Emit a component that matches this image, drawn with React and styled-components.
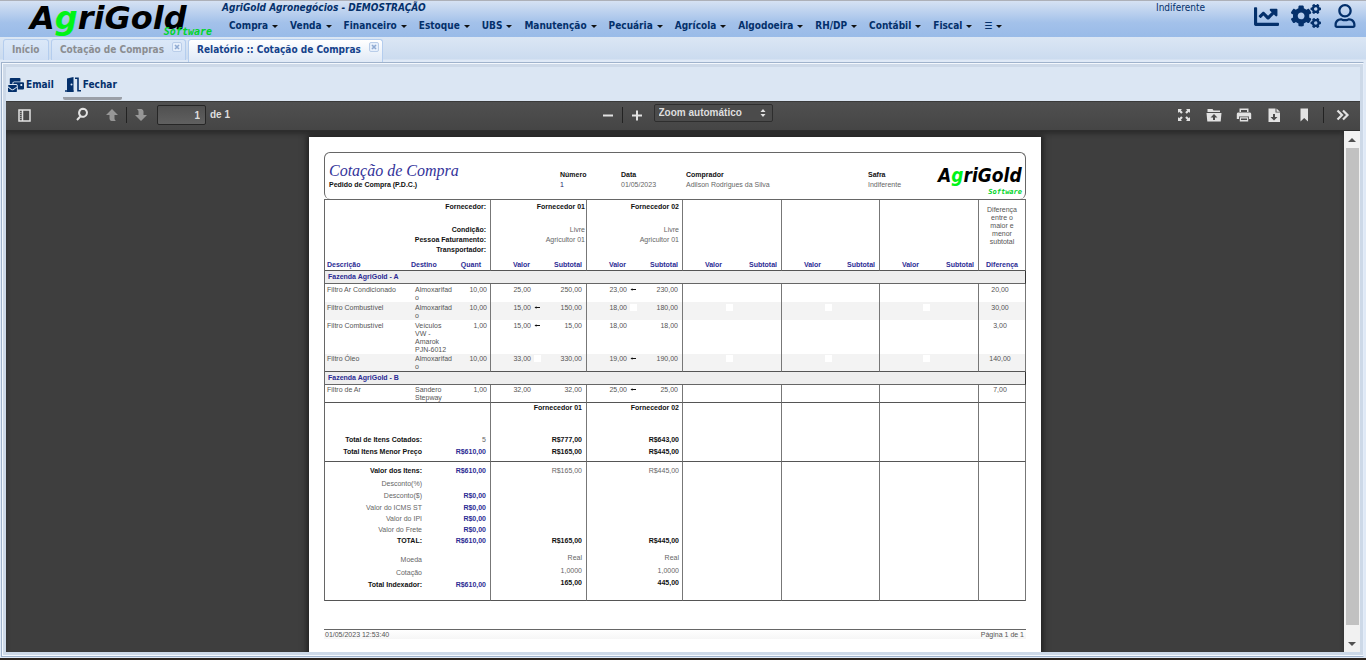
import React from 'react';
import styled, {createGlobalStyle, css} from 'styled-components';
import {FaChartLine, FaCogs, FaRegUser, FaMailBulk} from 'react-icons/fa';

const GlobalStyle = createGlobalStyle`
  * {
    box-sizing: border-box;
  }
  body {
    margin: 0;
    overflow: hidden;
  }
  button, input, select {
    font: inherit;
    color: inherit;
    margin: 0;
    padding: 0;
    border: 0;
    background: none;
  }
`

const uiFont = '"DejaVu Sans Condensed", "DejaVu Sans", sans-serif';
const navy = '#04306b';

const Screen = styled.div`
  height: 100vh;
  display: flex;
  flex-direction: column;
  font-family: ${uiFont};
  font-size: 10px;
  line-height: 14px;
  color: ${navy};
  background: #dfe9f6;
  border-top: 1px solid #adb0b8;
  border-bottom: 2px solid #2c241e;
`
const Header = styled.header`
  flex: none;
  height: 36px;
  display: flex;
  background: linear-gradient(#d6e2f3, #a3c1ea 60%, #99bbe8);
`
const HeaderLogo = styled.svg`
  flex: none;
  width: 222px;
  height: 36px;
  overflow: visible;
`
const HeaderMain = styled.div`
  flex: 1;
`
const Company = styled.div`
  font-weight: bold;
  font-style: italic;
`
const Menu = styled.nav`
  display: flex;
  gap: 12px;
  padding: 4px 0 0 7px;
`
const MenuButton = styled.button`
  display: flex;
  align-items: center;
  gap: 4px;
  font-weight: bold;
  line-height: 14px;
  &::after {
    content: '';
    border: 3px solid transparent;
    border-top-color: #111;
    border-bottom: 0;
  }
`
const Season = styled.div`
  width: 98px;
`
const HeaderIcons = styled.div`
  display: flex;
  align-items: flex-start;
  gap: 12px;
  padding: 2px 9px 0 0;
`
const IconButton = styled.button`
  display: flex;
  align-items: center;
  height: 26px;
  svg {
    display: block;
  }
`

const Tabs = styled.div`
  flex: none;
  height: 25px;
  display: flex;
  gap: 2px;
  padding: 2px 3px 0;
  background: linear-gradient(#dbe6f4, #cbdbef 22px, #dfe9f6 23px);
`
const Tab = styled.div`
  min-width: 46px;
  height: 21px;
  display: flex;
  align-items: flex-start;
  gap: 8px;
  padding: 0 2px 0 8px;
  border: 1px solid #b4cdee;
  border-bottom: 0;
  border-radius: 3px 3px 0 0;
  background: linear-gradient(#dbe8f8, #cfdff5);
  ${({active}) => active && css`
    height: 23px;
    background: linear-gradient(#fff, #dfe9f6);
  `};
`
const TabButton = styled.button`
  height: 19px;
  font-weight: bold;
  color: ${({active}) => active ? '#15428b' : '#8b8d91'};
`
const CloseButton = styled.button`
  width: 11px;
  height: 11px;
  margin-top: 2px;
  svg {
    display: block;
  }
`

const Frame = styled.main`
  flex: 1;
  min-height: 0;
  display: flex;
  margin: 0 2px 1px 1px;
  border: 1px solid #9fb2cb;
  border-right-color: #e4edf9;
  background: #f4f8fd;
  padding: 1px 0 1px 1px;
`
const FrameInner = styled.div`
  flex: 1;
  min-width: 0;
  display: flex;
  flex-direction: column;
  border: 3px solid #cdd9e8;
`
const Actions = styled.div`
  flex: none;
  height: 34px;
  display: flex;
  gap: 8px;
  padding: 5px 0 0 2px;
  background: #dbe6f3;
`
const Action = styled.button`
  display: flex;
  align-items: center;
  gap: 2px;
  height: 28px;
  font-weight: bold;
  border-bottom: 3px solid ${({current}) => current ? '#9a9fa7' : 'transparent'};
  border-radius: 0 0 2px 2px;
  padding: ${({current}) => current ? '0 5px 0 2px' : '0 1px 0 0'};
`

const Viewer = styled.div`
  flex: 1;
  min-height: 0;
  display: flex;
  flex-direction: column;
  background: #3e3e3e;
`
const ViewerBar = styled.div`
  flex: none;
  height: 30px;
  display: grid;
  grid-template-columns: 1fr auto 1fr;
  padding-bottom: 2px;
  background: linear-gradient(#505050, #454545);
  border-top: 1px solid #3a3a3a;
  border-bottom: 1px solid #2d2d2d;
  font: bold 10px/14px "Liberation Sans", Arial, sans-serif;
  color: #dedede;
`
const BarGroup = styled.div`
  display: flex;
  align-items: center;
  justify-content: ${({end}) => end ? 'flex-end' : 'flex-start'};
  padding: ${({end}) => end ? '0 2px 0 0' : '0 0 0 10px'};
`
const ZoomGroup = styled(BarGroup)`
  padding: 0 0 0 6px;
`
const ToolButton = styled.button`
  width: ${({wide}) => wide ? 30 : 16}px;
  height: 24px;
  display: flex;
  align-items: center;
  justify-content: center;
  opacity: ${({disabled}) => disabled ? 0.5 : 1};
`
const Gap = styled.span`
  width: ${({size}) => size}px;
`
const Separator = styled.span`
  width: 1px;
  height: 16px;
  margin: 0 ${({space}) => space}px;
  background: #222;
`
const PageInput = styled.input`
  width: 49px;
  height: 20px;
  margin: 0 4px 0 8px;
  padding-right: 5px;
  text-align: right;
  border: 1px solid #262626;
  border-radius: 2px;
  background: linear-gradient(#505050, #606060);
`
const ZoomBox = styled.div`
  display: grid;
  align-self: flex-start;
  width: 119px;
  height: 18px;
  margin: 2px 0 0 9px;
  border: 1px solid #2e2e2e;
  border-radius: 2px;
  background: #4b4b4b;
  > * {
    grid-area: 1 / 1;
  }
  svg {
    justify-self: end;
    align-self: center;
    margin-right: 6px;
    pointer-events: none;
  }
`
const ZoomSelect = styled.select`
  appearance: none;
  padding-left: 4px;
`

const ViewerBody = styled.div`
  flex: 1;
  min-height: 0;
  display: flex;
`
const Canvas = styled.div`
  flex: 1;
  overflow: hidden;
  display: flex;
  justify-content: center;
  padding: 6px 0 0;
  box-shadow: inset 0 3px 4px #2c2c2c;
`
const Scrollbar = styled.div`
  width: 16px;
  display: flex;
  flex-direction: column;
  background: #f1f1f1;
`
const ScrollArrow = styled.button`
  height: 17px;
  display: flex;
  align-items: center;
  justify-content: center;
`
const ScrollTrack = styled.div`
  flex: 1;
  padding: 0 1px 10px 2px;
`
const ScrollThumb = styled.div`
  height: 100%;
  background: #c1c1c1;
`

const Sheet = styled.article`
  flex: none;
  width: 732px;
  height: 1035px;
  padding: 15px 15px 0;
  background: #fff;
  box-shadow: 0 0 6px 2px #1f1f1f;
  font: 7px/8px "Liberation Sans", Arial, sans-serif;
  color: #555;
`
const SheetHead = styled.div`
  display: grid;
  grid-template-columns: 235px 61px 65px 182px 66px 1fr;
  height: 47px;
  border: 1px solid #666;
  border-bottom: 0;
  border-radius: 6px;
`
const SheetTitle = styled.h1`
  margin: 7px 0 0 4px;
  font: italic 16px/21px "Liberation Serif", "Times New Roman", serif;
  color: #33339a;
`
const SheetSub = styled.div`
  margin-left: 4px;
  font-weight: bold;
  color: #111;
`
const Field = styled.div`
  padding-top: 17px;
  line-height: 10px;
  color: ${({strong}) => strong ? '#22226a' : '#666'};
  b {
    display: block;
    color: #111;
  }
`
const Report = styled.table`
  width: 702px;
  table-layout: fixed;
  border-collapse: separate;
  border-spacing: 0;
  border: solid #666;
  border-width: 1px 0 0 1px;
`
const Row = styled.tr`
  height: ${({h}) => h}px;
  background: ${({shaded}) => shaded ? '#f3f3f3' : '#fff'};
`
const Cell = styled.td`
  padding: ${({end}) => end ? 1 : 2}px ${({right = 4}) => right}px 0 ${({left = 0}) => left}px;
  text-align: ${({align = 'left'}) => align};
  vertical-align: top;
  overflow-wrap: break-word;
  ${({line}) => line && css`border-right: 1px solid #777;`};
  ${({end}) => end && css`border-bottom: 1px solid #555;`};
`
const HeadCell = styled(Cell).attrs({as: 'th'})`
  font-weight: bold;
  color: ${({dark}) => dark ? '#111' : '#2b2b94'};
`
const SupplierLines = styled.div`
  display: grid;
  grid-template-rows: 23px 10px 10px 10px;
  line-height: 10px;
  span {
    font-weight: normal;
    color: #666;
  }
`
const DiffNote = styled.div`
  padding-top: 4px;
  font-weight: normal;
  color: #555;
`
const GroupCell = styled.th`
  height: 13px;
  padding: 0 3px;
  text-align: left;
  line-height: 12px;
  font-weight: bold;
  color: #2b2b94;
  background: #eee;
  border-right: 1px solid #333;
  border-bottom: 1px solid #666;
`
const PriceFlag = styled.span`
  display: inline-block;
  width: 7px;
  height: 7px;
  margin-left: 3px;
  vertical-align: top;
  background: ${({blank}) => blank ? '#fff' : 'none'};
  svg {
    display: block;
  }
`
const TotalCell = styled.td`
  padding: 0 ${({right = 4}) => right}px ${({lift = 0}) => lift}px 0;
  text-align: right;
  vertical-align: bottom;
  line-height: 10px;
  font-weight: ${({bold}) => bold ? 'bold' : 'normal'};
  color: ${({tone = '#666'}) => tone};
  ${({line}) => line && css`border-right: 1px solid #777;`};
  ${({end}) => end && css`border-bottom: 1px solid #555;`};
`
const SheetFoot = styled.footer`
  display: flex;
  justify-content: space-between;
  margin-top: 28px;
  padding: 1px 2px 0 1px;
  border-top: 1px solid #666;
  background: linear-gradient(#fff, #f6f6f6);
`

const menuItems = ['Compra', 'Venda', 'Financeiro', 'Estoque', 'UBS', 'Manutenção', 'Pecuária',
  'Agrícola', 'Algodoeira', 'RH/DP', 'Contábil', 'Fiscal', '☰'];

const suppliers = [
  {name: 'Fornecedor 01', terms: 'Livre', billing: 'Agricultor 01', inset: 1},
  {name: 'Fornecedor 02', terms: 'Livre', billing: 'Agricultor 01', inset: 3},
  {}, {}, {},
];

const colWidths = [86, 12, 31, 37, 51, 45, 51, 45, 51, 48, 51, 47, 51, 48, 47];

const groups = [
  {
    title: 'Fazenda AgriGold - A',
    items: [
      {name: 'Filtro Ar Condicionado', dest: 'Almoxarifado', qty: '10,00', prices: [['25,00', '250,00'], ['23,00', '230,00']], best: 1, diff: '20,00', h: 18},
      {name: 'Filtro Combustível', dest: 'Almoxarifado', qty: '10,00', prices: [['15,00', '150,00'], ['18,00', '180,00']], best: 0, diff: '30,00', h: 18},
      {name: 'Filtro Combustível', dest: 'Veículos VW - Amarok PJN-6012', qty: '1,00', prices: [['15,00', '15,00'], ['18,00', '18,00']], best: 0, diff: '3,00', h: 34},
      {name: 'Filtro Óleo', dest: 'Almoxarifado', qty: '10,00', prices: [['33,00', '330,00'], ['19,00', '190,00']], best: 1, diff: '140,00', h: 18},
    ],
  },
  {
    title: 'Fazenda AgriGold - B',
    items: [
      {name: 'Filtro de Ar', dest: 'Sandero Stepway', qty: '1,00', prices: [['32,00', '32,00'], ['25,00', '25,00']], best: 1, diff: '7,00', h: 18},
    ],
  },
];

const totals = [
  {values: ['Fornecedor 01', 'Fornecedor 02'], bold: true, h: 10},
  {label: 'Total de Itens Cotados:', sum: '5', plainSum: true, values: ['R$777,00', 'R$643,00'], bold: true, h: 32},
  {label: 'Total Itens Menor Preço', sum: 'R$610,00', values: ['R$165,00', 'R$445,00'], bold: true, h: 17, lift: 4, end: true},
  {label: 'Valor dos Itens:', sum: 'R$610,00', values: ['R$165,00', 'R$445,00'], boldLabel: true, h: 14},
  {label: 'Desconto(%)', h: 13},
  {label: 'Desconto($)', sum: 'R$0,00', h: 12},
  {label: 'Valor do ICMS ST', sum: 'R$0,00', h: 12},
  {label: 'Valor do IPI', sum: 'R$0,00', h: 11},
  {label: 'Valor do Frete', sum: 'R$0,00', h: 11},
  {label: 'TOTAL:', sum: 'R$610,00', values: ['R$165,00', 'R$445,00'], bold: true, h: 11},
  {label: 'Moeda', values: ['Real', 'Real'], h: 19, raise: 2},
  {label: 'Cotação', values: ['1,0000', '1,0000'], h: 13, raise: 2},
  {label: 'Total Indexador:', sum: 'R$610,00', values: ['165,00', '445,00'], bold: true, h: 21, lift: 10, raise: 2, end: true},
];

const CloseIcon = () => (
  <svg width="11" height="11" viewBox="0 0 11 11">
    <rect x="0.5" y="0.5" width="9" height="9" rx="1.5" fill="#e6effb" stroke="#b9cde9"/>
    <path d="M3 3l4 4M7 3l-4 4" stroke="#8faad2" strokeWidth="1.6"/>
  </svg>
)

const DoorIcon = () => (
  <svg width="16" height="15" viewBox="0 0 16 15">
    <path d="M2 1.500L8.500 0v15H2z" fill={navy}/>
    <path d="M0 14h8.500M10 1.200h3v12.600h3" fill="none" stroke={navy} strokeWidth="1.600"/>
    <circle cx="6.500" cy="7.500" r="1" fill="#dbe6f3"/>
  </svg>
)

const toolPaths = {
  sidebar: <><rect x="3" y="3" width="11" height="11" fill="none" stroke="#e2e2e2" strokeWidth="1.500"/><path d="M6.500 3v11" stroke="#e2e2e2" strokeWidth="1.500"/><path d="M4 5.500h2M4 7.500h2M4 9.500h2M4 11.500h2" stroke="#999"/></>,
  search: <path d="M9 1.800a4 4 0 1 1-2.300 7.300L3 13M6.700 9A4 4 0 0 1 9 1.800" fill="none" stroke="#e2e2e2" strokeWidth="2"/>,
  up: <path d="M8 2l6 6h-3.500v3.500q0 1.500 1.500 2.500H7.500q-2-.5-2-2.500V8H2z"/>,
  down: <path d="M8 14l6-6h-3.500V4.500q0-2-2-2.500H4q1.500 1 1.500 2.500V8H2z"/>,
  minus: <path d="M3 7.500h10v2H3z"/>,
  plus: <path d="M3 7.500h4v-4h2v4h4v2H9v4H7v-4H3z"/>,
  full: <path d="M2 2h4L4.800 3.200l2 2-1.600 1.600-2-2L2 6zM14 2v4l-1.200-1.200-2 2-1.600-1.600 2-2L10 2zM2 14v-4l1.200 1.200 2-2 1.600 1.600-2 2L6 14zM14 14h-4l1.200-1.200-2-2 1.600-1.600 2 2L14 10z"/>,
  open: <path fillRule="evenodd" d="M1.500 2h5l1 1.500H14V5H1.500zM.5 6h15l-.8 8.500H1.300zM8 7L4.500 10.500H7V13h2v-2.500h2.500z"/>,
  print: <path fillRule="evenodd" d="M3.500 1.500h9V5h-9zM5 3v2h6V3zM2 5.500h12q1.200 0 1.200 1.500v5H13V9.500H3V12H.8V7Q.8 5.500 2 5.500zM3.800 10.300h8.400v4.200H3.800zM5 11.500v1.500h6v-1.500z"/>,
  save: <path fillRule="evenodd" d="M2.500 1.500h7v4h4.500V15H2.500zM10.500 1.500L14 4.800h-3.500zM7 7v3H4.500L8 13.500l3.500-3.500H9V7z"/>,
  mark: <path d="M4.500 1.500h7.500v13L8.200 11l-3.700 3.500z"/>,
  more: <path d="M2.500 3.500L7 8l-4.500 4.500M8 3.500L12.500 8 8 12.500" fill="none" stroke="#e2e2e2" strokeWidth="2.200"/>,
};

const Tool = ({icon, label, wide, disabled}) => (
  <ToolButton aria-label={label} wide={wide} disabled={disabled}>
    <svg width="16" height="16" viewBox="0 0 16 16" fill="#e2e2e2">{toolPaths[icon]}</svg>
  </ToolButton>
)

const Flag = ({best, shaded}) => (
  <PriceFlag blank={shaded && !best}>
    {best && (
      <svg width="7" height="7" viewBox="0 0 7 7">
        <path d="M0.500 3.500l2-1.300v.8h3.500v1H2.500v.8z" fill="#111"/>
      </svg>
    )}
  </PriceFlag>
)

const ItemRow = ({item, shaded, end}) => (
  <Row h={item.h} shaded={shaded}>
    <Cell left={2} end={end}>{item.name}</Cell>
    <Cell colSpan={2} left={4} right={0} end={end}>{item.dest}</Cell>
    <Cell align="right" right={3} line end={end}>{item.qty}</Cell>
    {suppliers.map((supplier, i) => {
      const price = item.prices[i] || [];
      return (
        <React.Fragment key={i}>
          <Cell align="right" right={1} end={end}>
            {price[0]}<Flag best={item.best === i} shaded={shaded}/>
          </Cell>
          <Cell align="right" line end={end}>{price[1]}</Cell>
        </React.Fragment>
      )
    })}
    <Cell align="center" line end={end}>{item.diff}</Cell>
  </Row>
)

const TotalRow = ({row}) => (
  <Row h={row.h}>
    <TotalCell colSpan={2} right={1} lift={row.lift} end={row.end} bold={row.bold || row.boldLabel}
      tone={row.bold || row.boldLabel ? '#111' : '#666'}>{row.label}</TotalCell>
    <TotalCell colSpan={2} lift={row.lift} end={row.end} line bold={!row.plainSum}
      tone={row.plainSum ? '#666' : '#2b2b94'}>{row.sum}</TotalCell>
    {suppliers.map((supplier, i) => (
      <TotalCell key={i} colSpan={2} right={i ? 3 : 4} lift={(row.lift || 0) + (row.raise || 0)} end={row.end} line
        bold={row.bold} tone={row.bold ? '#111' : '#666'}>{row.values && row.values[i]}</TotalCell>
    ))}
    <TotalCell line end={row.end}/>
  </Row>
)

const QuoteReport = () => (
  <Report>
    <colgroup>
      {colWidths.map((width, i) => <col key={i} width={width}/>)}
    </colgroup>
    <thead>
      <Row h={60}>
        <HeadCell colSpan={4} align="right" dark line>
          <SupplierLines>
            <div>Fornecedor:</div>
            <div>Condição:</div>
            <div>Pessoa Faturamento:</div>
            <div>Transportador:</div>
          </SupplierLines>
        </HeadCell>
        {suppliers.map((supplier, i) => (
          <HeadCell key={i} colSpan={2} align="right" right={supplier.inset} dark line>
            {supplier.name && (
              <SupplierLines>
                <div>{supplier.name}</div>
                <span>{supplier.terms}</span>
                <span>{supplier.billing}</span>
              </SupplierLines>
            )}
          </HeadCell>
        ))}
        <HeadCell align="center" left={4} line>
          <DiffNote>Diferença entre o maior e menor subtotal</DiffNote>
        </HeadCell>
      </Row>
      <Row h={11}>
        <HeadCell left={2} end>Descrição</HeadCell>
        <HeadCell colSpan={2} end>Destino</HeadCell>
        <HeadCell align="right" right={9} line end>Quant</HeadCell>
        {suppliers.map((supplier, i) => (
          <React.Fragment key={i}>
            <HeadCell align="right" right={12} end>Valor</HeadCell>
            <HeadCell align="right" line end>Subtotal</HeadCell>
          </React.Fragment>
        ))}
        <HeadCell align="center" right={0} line end>Diferença</HeadCell>
      </Row>
    </thead>
    <tbody>
      {groups.map(group => (
        <React.Fragment key={group.title}>
          <tr>
            <GroupCell colSpan={15}>{group.title}</GroupCell>
          </tr>
          {group.items.map((item, i) => (
            <ItemRow key={i} item={item} shaded={i % 2 === 1} end={i === group.items.length - 1}/>
          ))}
        </React.Fragment>
      ))}
      {totals.map((row, i) => <TotalRow key={i} row={row}/>)}
    </tbody>
  </Report>
)

const Toolbar = () => (
  <ViewerBar>
    <BarGroup>
      <Tool icon="sidebar" label="Painel"/>
      <Gap size={42}/>
      <Tool icon="search" label="Localizar"/>
      <Gap size={14}/>
      <Tool icon="up" label="Anterior" disabled/>
      <Separator space={6}/>
      <Tool icon="down" label="Próxima" disabled/>
      <PageInput aria-label="Página" defaultValue="1"/>
      <span>de 1</span>
    </BarGroup>
    <ZoomGroup>
      <Tool icon="minus" label="Reduzir"/>
      <Separator space={6}/>
      <Tool icon="plus" label="Ampliar"/>
      <ZoomBox>
        <ZoomSelect aria-label="Zoom">
          <option>Zoom automático</option>
        </ZoomSelect>
        <svg width="6" height="8" viewBox="0 0 6 8" fill="#e2e2e2"><path d="M3 0l2.500 3h-5zM3 8l2.500-3h-5z"/></svg>
      </ZoomBox>
    </ZoomGroup>
    <BarGroup end>
      <Tool icon="full" label="Tela cheia" wide/>
      <Tool icon="open" label="Abrir" wide/>
      <Tool icon="print" label="Imprimir" wide/>
      <Tool icon="save" label="Baixar" wide/>
      <Tool icon="mark" label="Marcador" wide/>
      <Separator space={4}/>
      <Tool icon="more" label="Ferramentas" wide/>
    </BarGroup>
  </ViewerBar>
)

const App = () => (
  <>
    <GlobalStyle/>
    <Screen>
      <Header>
        <HeaderLogo viewBox="0 0 222 36" role="img" aria-label="AgriGold Software"
          fontFamily='"DejaVu Sans", sans-serif' fontWeight="bold" fontStyle="italic">
          <text x="30" y="28" fontSize="32">A<tspan fill="#00f416">g</tspan>riGold</text>
          <text x="212" y="34" fontSize="10" textAnchor="end" fill="#00d42a" fontFamily='"DejaVu Sans Mono", monospace'>Software</text>
        </HeaderLogo>
        <HeaderMain>
          <Company>AgriGold Agronegócios - DEMOSTRAÇÃO</Company>
          <Menu>
            {menuItems.map(item => <MenuButton key={item}>{item}</MenuButton>)}
          </Menu>
        </HeaderMain>
        <Season>Indiferente</Season>
        <HeaderIcons>
          <IconButton aria-label="Gráficos"><FaChartLine size={25}/></IconButton>
          <IconButton aria-label="Configurações"><FaCogs size={30}/></IconButton>
          <IconButton aria-label="Usuário"><FaRegUser size={24}/></IconButton>
        </HeaderIcons>
      </Header>
      <Tabs>
        <Tab><TabButton>Início</TabButton></Tab>
        <Tab>
          <TabButton>Cotação de Compras</TabButton>
          <CloseButton aria-label="Fechar aba"><CloseIcon/></CloseButton>
        </Tab>
        <Tab active>
          <TabButton active>Relatório :: Cotação de Compras</TabButton>
          <CloseButton aria-label="Fechar aba"><CloseIcon/></CloseButton>
        </Tab>
      </Tabs>
      <Frame>
        <FrameInner>
          <Actions>
            <Action><FaMailBulk size={16}/>Email</Action>
            <Action current><DoorIcon/>Fechar</Action>
          </Actions>
          <Viewer>
            <Toolbar/>
            <ViewerBody>
              <Canvas>
                <Sheet>
                  <SheetHead>
                    <div>
                      <SheetTitle>Cotação de Compra</SheetTitle>
                      <SheetSub>Pedido de Compra (P.D.C.)</SheetSub>
                    </div>
                    <Field strong><b>Número</b>1</Field>
                    <Field><b>Data</b>01/05/2023</Field>
                    <Field><b>Comprador</b>Adilson Rodrigues da Silva</Field>
                    <Field><b>Safra</b>Indiferente</Field>
                    <svg width="90" height="45" viewBox="0 0 90 45" role="img" aria-label="AgriGold Software"
                      fontFamily='"DejaVu Sans Condensed", "DejaVu Sans", sans-serif' fontWeight="bold" fontStyle="italic">
                      <text x="4" y="29" fontSize="19">A<tspan fill="#00f416">g</tspan>riGold</text>
                      <text x="88" y="41" fontSize="7" textAnchor="end" fill="#00d42a" fontFamily='"DejaVu Sans Mono", monospace'>Software</text>
                    </svg>
                  </SheetHead>
                  <QuoteReport/>
                  <SheetFoot>
                    <span>01/05/2023 12:53:40</span>
                    <span>Página 1 de 1</span>
                  </SheetFoot>
                </Sheet>
              </Canvas>
              <Scrollbar>
                <ScrollArrow aria-label="Subir"><svg width="8" height="4" viewBox="0 0 8 4"><path d="M4 0l4 4H0z" fill="#505050"/></svg></ScrollArrow>
                <ScrollTrack><ScrollThumb/></ScrollTrack>
                <ScrollArrow aria-label="Descer"><svg width="8" height="4" viewBox="0 0 8 4"><path d="M4 4l4-4H0z" fill="#505050"/></svg></ScrollArrow>
              </Scrollbar>
            </ViewerBody>
          </Viewer>
        </FrameInner>
      </Frame>
    </Screen>
  </>
)

export default App
